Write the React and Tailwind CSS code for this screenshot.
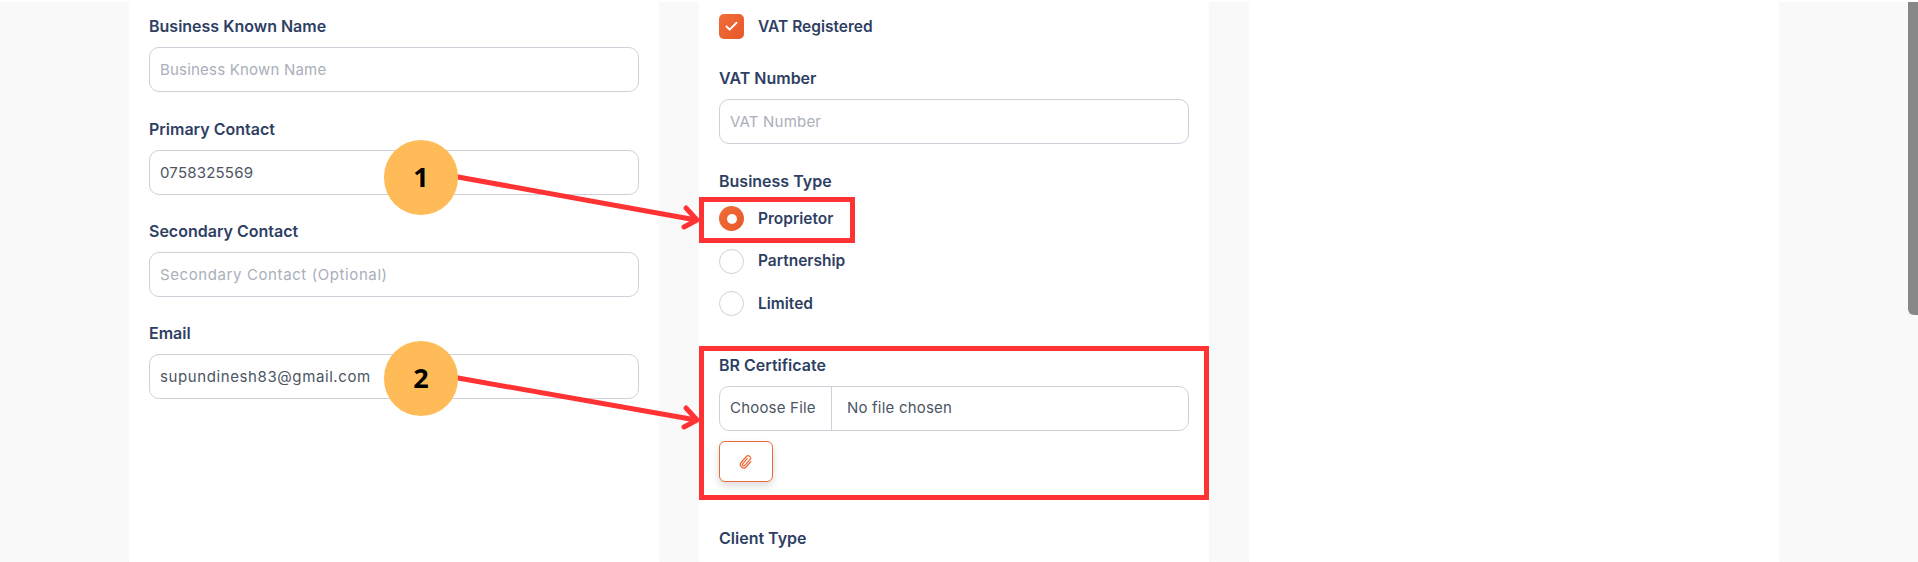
import React from 'react'
import { Check } from 'lucide-react'

const font = "font-['Inter','Noto_Sans',sans-serif]"

const Label = ({ children }) => (
  <label className="block h-6 text-[16px] leading-[23px] font-semibold text-[#2f3f63]">
    {children}
  </label>
)

const Field = ({ label, placeholder, value, wide }) => (
  <div>
    <Label>{label}</Label>
    <input
      type="text"
      readOnly
      placeholder={placeholder}
      defaultValue={value}
      className={`mt-2 block h-[45px] w-full rounded-[10px] border border-[#cdd1da] bg-white px-[10px] text-[15px] text-[#4b5563] outline-none placeholder:text-[#a9afba] ${wide ? 'tracking-[0.6px]' : 'tracking-[0.2px]'}`}
    />
  </div>
)

const Radio = ({ label, checked }) => (
  <div className="flex h-[25px] items-center gap-[14px]">
    {checked ? (
      <span className="flex h-[25px] w-[25px] items-center justify-center rounded-full bg-gradient-to-br from-[#f06d38] to-[#e8582a]">
        <span className="h-[10px] w-[10px] rounded-full bg-white" />
      </span>
    ) : (
      <span className="h-[25px] w-[25px] rounded-full border border-[#cdd1da] bg-white" />
    )}
    <span className="text-[15.5px] font-semibold text-[#2f3f63]">{label}</span>
  </div>
)

const Badge = ({ num, className }) => (
  <div className={`absolute flex h-[75px] w-[74px] items-center justify-center rounded-full bg-[#ffbb58] font-['Open_Sans',sans-serif] text-[27px] font-bold text-black ${className}`}>
    {num}
  </div>
)

// paperclip from the attach button, tilted like the original
const ClipIcon = () => (
  <svg width="16" height="16" viewBox="0 0 24 24" fill="none" stroke="currentColor" strokeWidth="2" strokeLinecap="round" strokeLinejoin="round">
    <path transform="rotate(42 12 12)" d="M10 7v10a2 2 0 0 0 4 0V5.5a3.5 3.5 0 0 0-7 0V17a5 5 0 0 0 10 0V7" />
  </svg>
)

const App = () => {
  return (
    <div className={`relative h-[562px] w-[1918px] overflow-hidden bg-white pt-[2px] ${font}`}>
      <div className="flex h-[560px] gap-[40px] bg-[repeating-conic-gradient(#f6f6f6_0_25%,#fcfcfc_0_50%)] bg-[length:2px_2px] pl-[129px]">
        {/* left column */}
        <div className="flex w-[530px] flex-col gap-[25.4px] bg-white px-5 pt-[13.2px]">
          <Field label="Business Known Name" placeholder="Business Known Name" />
          <Field label="Primary Contact" value="0758325569" />
          <Field label="Secondary Contact" placeholder="Secondary Contact (Optional)" wide />
          <Field label="Email" value="supundinesh83@gmail.com" wide />
        </div>

        {/* middle column */}
        <div className="w-[510px] bg-white px-5 pt-3">
          <div className="flex h-[25px] items-center gap-[14px]">
            <span className="flex h-[25px] w-[25px] items-center justify-center rounded-[5px] bg-gradient-to-br from-[#f06d38] to-[#e8582a]">
              <Check size={15} strokeWidth={3} className="text-white" />
            </span>
            <span className="text-[15.5px] font-semibold text-[#2f3f63]">VAT Registered</span>
          </div>

          <div className="mt-7">
            <Field label="VAT Number" placeholder="VAT Number" />
          </div>

          <div className="mt-[26px]">
            <Label>Business Type</Label>
            <div className="mt-3 flex flex-col gap-[17.5px]">
              <Radio label="Proprietor" checked />
              <Radio label="Partnership" />
              <Radio label="Limited" />
            </div>
          </div>

          <div className="mt-[38px]">
            <Label>BR Certificate</Label>
            <div className="mt-2 flex h-[45px] items-center overflow-hidden rounded-[10px] border border-[#cdd1da] bg-white text-[15px] tracking-[0.2px] text-[#4b5563]">
              <span className="flex h-full w-[112px] items-center border-r border-[#cdd1da] pl-[10px]">Choose File</span>
              <span className="pl-[15px]">No file chosen</span>
            </div>
            <button className="mt-[10px] flex h-[41px] w-[54px] items-center justify-center rounded-[6px] border border-[#ea6a3c] bg-white text-[#ee6d40] shadow-[0_4px_8px_rgba(0,0,0,0.14)]">
              <ClipIcon />
            </button>
          </div>

          <div className="mt-[45px]">
            <Label>Client Type</Label>
          </div>
        </div>

        {/* right column */}
        <div className="w-[530px] bg-white" />
      </div>

      {/* scrollbar */}
      <div className="absolute right-0 top-[2px] h-[313px] w-[10px] rounded-bl-[6px] bg-[#888888]" />

      {/* annotations */}
      <div className="absolute left-[699px] top-[197px] h-[46px] w-[156px] border-[5px] border-[#ff3333]" />
      <div className="absolute left-[699px] top-[346px] h-[154px] w-[510px] border-[5px] border-[#ff3333]" />

      <svg className="absolute left-0 top-0" width="1918" height="562" fill="none" stroke="#ff3333" strokeWidth="5" strokeLinecap="round" strokeLinejoin="round">
        <path d="M458 177 L696 220" />
        <path d="M686 208 L697 220 L684 227" />
        <path d="M458 378 L696 420" />
        <path d="M686 408 L697 420 L684 427" />
      </svg>

      <Badge num="1" className="left-[384px] top-[140px]" />
      <Badge num="2" className="left-[384px] top-[341px]" />
    </div>
  )
}

export default App
